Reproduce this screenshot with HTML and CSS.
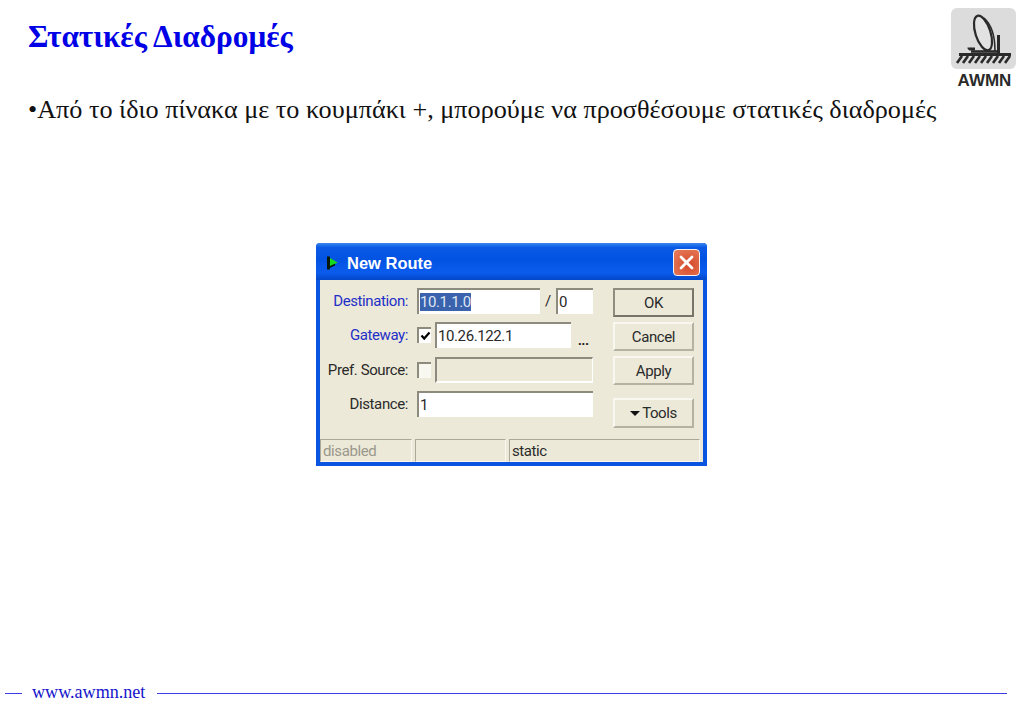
FILE: index.html
```html
<!DOCTYPE html>
<html lang="el">
<head>
<meta charset="utf-8">
<title>Στατικές Διαδρομές</title>
<link rel="stylesheet" href="styles.css">
</head>
<body>
<main class="slide">
  <header class="slide-head">
    <div class="slide-text">
      <h1 class="slide-title">Στατικές Διαδρομές</h1>
      <p class="slide-bullet">•Από το ίδιο πίνακα με το κουμπάκι +, μπορούμε να προσθέσουμε στατικές διαδρομές</p>
    </div>
    <div class="logo">
      <div class="logo-tile">
        <svg width="65" height="60" viewBox="0 0 65 60">
          <g fill="none" stroke="#2a2a2a">
            <ellipse cx="32" cy="25" rx="7.5" ry="18" transform="rotate(-18 32 25)" fill="#e2e2e2" stroke-width="2.2"/>
            <path d="M33 10 C41 17 44 30 44 43" stroke-width="1.6"/>
            <path d="M47.5 27 V45" stroke-width="3"/>
            <path d="M20 43.5 H47" stroke-width="2.6"/>
            <path d="M24 41 H20.5 Q18 41 18 39.5" stroke-width="3.2"/>
            <path d="M8 46.5 H60" stroke-width="2.8"/>
            <path d="M11 48 L6 55 M17 48 L12 55 M23 48 L18 55 M29 48 L24 55 M35 48 L30 55 M41 48 L36 55 M47 48 L42 55 M53 48 L48 55 M59 48 L54 55" stroke-width="2.6"/>
          </g>
        </svg>
      </div>
      <div class="logo-name">AWMN</div>
    </div>
  </header>

  <section class="window">
    <div class="titlebar">
      <svg class="title-icon" width="12" height="16" viewBox="0 0 12 16"><path d="M1.5 1.5 V14.5" stroke="#06180a" stroke-width="3"/><path d="M3 3 L10.5 7.5 L3 12 Z" fill="#12dc1c"/><path d="M3 12 L8 9.5" stroke="#06180a" stroke-width="1.4"/></svg>
      <span class="title-text">New Route</span>
      <button class="close" type="button" aria-label="Close">
        <svg width="17" height="17" viewBox="0 0 17 17"><path d="M3 3 L14 14 M14 3 L3 14" stroke="#fff" stroke-width="2.8" stroke-linecap="round"/></svg>
      </button>
    </div>
    <div class="body">
      <div class="content">
        <div class="form">
          <div class="row row-dest">
            <span class="label link">Destination:</span>
            <span class="field field-dest"><span class="selected">10.1.1.0</span></span>
            <span class="slash">/</span>
            <span class="field field-mask">0</span>
          </div>
          <div class="row row-gw">
            <span class="label link">Gateway:</span>
            <span class="check"><svg width="11" height="10" viewBox="0 0 11 10"><path d="M1.5 4.5 L4.2 7.5 L9.5 1.5" fill="none" stroke="#000" stroke-width="2.2"/></svg></span>
            <span class="field field-gw">10.26.122.1</span>
            <span class="dots">...</span>
          </div>
          <div class="row row-src">
            <span class="label">Pref. Source:</span>
            <span class="check"></span>
            <span class="field field-src"></span>
          </div>
          <div class="row row-dist">
            <span class="label">Distance:</span>
            <span class="field field-dist">1</span>
          </div>
        </div>
        <div class="buttons">
          <button class="btn btn-default" type="button">OK</button>
          <button class="btn" type="button">Cancel</button>
          <button class="btn" type="button">Apply</button>
          <button class="btn btn-tools" type="button"><span class="caret"></span>Tools</button>
        </div>
      </div>
      <div class="status">
        <span class="cell cell-a muted">disabled</span>
        <span class="cell cell-b"></span>
        <span class="cell cell-c">static</span>
      </div>
    </div>
  </section>

  <footer class="slide-foot">
    <span class="rule rule-short"></span>
    <span class="foot-link">www.awmn.net</span>
    <span class="rule rule-long"></span>
  </footer>
</main>
</body>
</html>
```

FILE: styles.css
```css
* { box-sizing: border-box; }
html, body { margin: 0; padding: 0; background: #fff; }
.slide {
  width: 1023px;
  height: 708px;
  overflow: hidden;
  display: flex;
  flex-direction: column;
  font-family: "Liberation Serif", "Times New Roman", serif;
}
.slide-head {
  display: flex;
  justify-content: space-between;
  height: 243px;
  flex: none;
  padding: 8px 7px 0 28px;
}
.slide-title {
  margin: 10px 0 0;
  color: #0000e6;
  font-size: 31.3px;
  line-height: 38px;
  font-weight: bold;
}
.slide-bullet {
  margin: 39px 0 0;
  color: #111;
  font-size: 26.2px;
  line-height: 30px;
  white-space: nowrap;
}
.logo { width: 65px; display: flex; flex-direction: column; align-items: center; }
.logo-tile {
  width: 65px;
  height: 61px;
  background: #dcdcdc;
  border-radius: 6px;
  flex: none;
}
.logo-tile svg { display: block; }
.logo-name {
  margin: 4px 0 0 2px;
  font-family: "Liberation Sans", Arial, sans-serif;
  font-weight: bold;
  font-size: 17px;
  line-height: 15px;
  color: #2a2a2a;
}

.window {
  margin-left: 316px;
  width: 391px;
  height: 223px;
  flex: none;
  display: flex;
  flex-direction: column;
  background: #0a55e0;
  border-radius: 4px 4px 0 0;
  padding: 0 4px 4px;
  font-family: Roboto, "Liberation Sans", Arial, sans-serif;
  font-size: 15px;
  letter-spacing: -0.4px;
  color: #2a2a2a;
}
.titlebar {
  height: 37px;
  flex: none;
  margin: 0 -4px;
  padding: 1px 7px 0 11px;
  display: flex;
  align-items: center;
  border-radius: 4px 4px 0 0;
  background: linear-gradient(#3c86f0, #0a5ae6 12%, #0353e3 45%, #0b5cee 80%, #0247c8);
}
.title-icon { margin-right: 8px; margin-top: 2px; }
.title-text {
  color: #fff;
  font-weight: bold;
  font-family: "Liberation Sans", sans-serif;
  font-size: 16.5px;
  letter-spacing: 0;
  padding-top: 3px;
  flex: 1;
}
.close {
  width: 27px;
  height: 27px;
  padding: 0;
  border: 1px solid #f4f4f4;
  border-radius: 4px;
  background: radial-gradient(circle at 60% 60%, #d4492a, #e8805e);
  display: flex;
  align-items: center;
  justify-content: center;
}
.body {
  flex: 1;
  display: flex;
  flex-direction: column;
  background: #ece9d8;
  min-height: 0;
}
.content { display: flex; height: 159px; flex: none; padding-top: 8px; }
.form { width: 293px; flex: none; }
.row { display: flex; align-items: center; }
.row-dest { height: 26px; }
.row-gw { height: 26px; margin-top: 8px; }
.row-src { height: 26px; margin-top: 9px; }
.row-dist { height: 26px; margin-top: 8px; }
.label {
  width: 88px;
  margin-right: 9px;
  flex: none;
  text-align: right;
  white-space: nowrap;
}
.link { color: #1f2fc8; }
.field {
  height: 26px;
  display: flex;
  align-items: center;
  padding-left: 1px;
  background: #fff;
  border-top: 2px solid #8d8a7e;
  border-left: 2px solid #8d8a7e;
  flex: none;
}
.field-dest { width: 123px; }
.selected { background: #3a62ad; color: #dfe6f4; }
.slash { width: 16px; text-align: center; }
.field-mask { width: 37px; }
.field-gw { width: 136px; }
.field-src { width: 158px; background: #ece9d8; border-right: 1px solid #fff; border-bottom: 2px solid #fff; }
.field-dist { width: 176px; }
.check {
  width: 14px;
  height: 16px;
  margin-right: 4px;
  flex: none;
  background: #fff;
  border-top: 2px solid #8d8a7e;
  border-left: 2px solid #8d8a7e;
  display: flex;
  align-items: center;
  justify-content: center;
}
.row-src .check { background: #f8f7f0; }
.dots {
  align-self: flex-end;
  margin-left: 7px;
  font-family: "Liberation Sans", sans-serif;
  font-weight: bold;
  font-size: 13px;
  line-height: 14px;
  letter-spacing: 0;
  color: #222;
}
.buttons { width: 81px; display: flex; flex-direction: column; gap: 5px; }
.btn {
  width: 81px;
  height: 29px;
  padding: 0;
  flex: none;
  background: #ece9d8;
  border: 2px solid #b5b2a3;
  border-top-color: #f8f7f0;
  border-left-color: #f8f7f0;
  font-family: Roboto, "Liberation Sans", Arial, sans-serif;
  font-size: 15px;
  letter-spacing: -0.4px;
  color: #2a2a2a;
}
.btn-default { border: 2px solid #77756a; border-top-color: #8f8d80; border-left-color: #8f8d80; }
.btn-tools { margin-top: 8px; height: 30px; display: flex; align-items: center; justify-content: center; }
.caret {
  width: 0;
  height: 0;
  margin-right: 2px;
  border-left: 5px solid transparent;
  border-right: 5px solid transparent;
  border-top: 5px solid #111;
}
.status { display: flex; gap: 3px; height: 23px; padding-right: 3px; }
.cell {
  display: flex;
  align-items: center;
  padding-left: 2px;
  border-top: 1px solid #aca899;
  border-left: 1px solid #aca899;
  border-right: 1px solid #f8f7f0;
  border-bottom: 1px solid #f8f7f0;
}
.cell-a { width: 92px; }
.cell-b { width: 91px; }
.cell-c { flex: 1; }
.muted { color: #9a988c; }

.slide-foot {
  margin-top: auto;
  height: 30px;
  padding: 0 16px 0 5px;
  display: flex;
  align-items: center;
  color: #1515cc;
  flex: none;
}
.foot-link { font-size: 18.1px; margin: 0 10px; padding-bottom: 1px; }
.rule { height: 1px; background: #3c3ce4; display: block; }
.rule-short { width: 17px; }
.rule-long { flex: 1; margin-left: 2px; }
```
